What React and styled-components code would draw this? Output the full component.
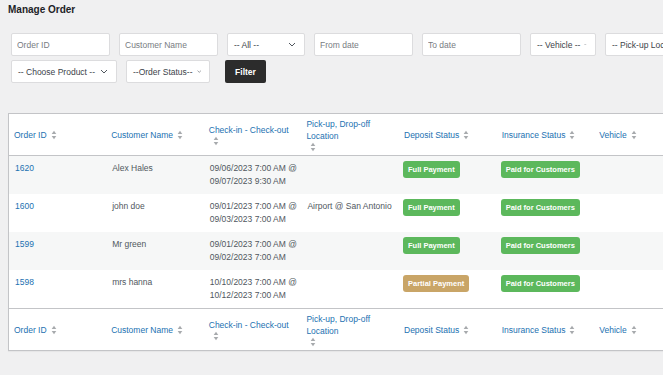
import React from 'react';
import styled, { createGlobalStyle } from 'styled-components';

const GlobalStyle = createGlobalStyle`
    body {
        margin: 0;
        background: #f0f0f1;
        font-family: "Liberation Sans", Arial, sans-serif;
        color: #2c3338;
        overflow: hidden;
    }
`;

const Page = styled.div`
    padding: 2px 8px 20px;
    width: 800px;
`;

const Title = styled.h1`
    margin: 0;
    font-size: 10px;
    font-weight: 700;
    line-height: 16px;
    color: #1d2327;
`;

const Filters = styled.div`
    margin: 15px 0 0 3px;
    width: 720px;
    display: flex;
    flex-wrap: wrap;
    column-gap: 9px;
    row-gap: 4px;
`;

const Input = styled.input`
    box-sizing: border-box;
    width: ${(p) => p.$w || 99}px;
    height: 23px;
    padding: 0 5px;
    border: 1px solid #dcdcde;
    border-radius: 2px;
    background: #fff;
    font-family: inherit;
    font-size: 8.5px;
    color: #2c3338;
    outline: none;
    &::placeholder {
        color: #787c82;
    }
`;

const Select = styled.div`
    box-sizing: border-box;
    width: ${(p) => p.$w}px;
    height: 23px;
    padding: 0 8px 0 6px;
    border: 1px solid #dcdcde;
    border-radius: 2px;
    background: #fff;
    font-size: 8.5px;
    color: #3c434a;
    display: flex;
    align-items: center;
    justify-content: space-between;
    gap: 4px;
    white-space: nowrap;
    overflow: hidden;
`;

const FilterButton = styled.button`
    box-sizing: border-box;
    margin-left: 6px;
    width: 41px;
    height: 23px;
    border: none;
    border-radius: 2px;
    background: #2c2c2c;
    color: #fff;
    font-family: inherit;
    font-size: 8.5px;
    font-weight: 700;
`;

const Table = styled.table`
    margin-top: 30px;
    width: 782px;
    table-layout: fixed;
    border-collapse: collapse;
    background: #fff;
    border: 1px solid #c3c4c7;
    box-shadow: 0 1px 1px rgba(0, 0, 0, 0.04);
`;

const Th = styled.th`
    height: 42px;
    box-sizing: border-box;
    padding: 3px 5px 3px 5px;
    text-align: left;
    vertical-align: middle;
    font-weight: 400;
    border-${(p) => (p.$foot ? 'top' : 'bottom')}: 1px solid #c3c4c7;
`;

const SortLink = styled.div`
    display: flex;
    flex-wrap: wrap;
    align-items: center;
    font-size: 8.5px;
    line-height: 12px;
    color: #2271b1;
`;

const Row = styled.tr`
    background: ${(p) => (p.$striped ? '#f6f7f7' : '#fff')};
`;

const Td = styled.td`
    height: 38px;
    box-sizing: border-box;
    padding: 6px 4px 6px 6px;
    vertical-align: top;
    font-size: 8.5px;
    line-height: 13px;
    color: ${(p) => (p.$link ? '#2271b1' : '#50575e')};
`;

const Badge = styled.span`
    display: inline-block;
    margin: -1px 0 0 -2px;
    padding: 3px 5px;
    border-radius: 3px;
    background: ${(p) => (p.$partial ? '#c9a567' : '#5cb85c')};
    color: #fff;
    font-size: 7.5px;
    font-weight: 700;
    line-height: 11px;
    white-space: nowrap;
`;

const SortWrap = styled.span`
    display: inline-flex;
    margin-left: 4px;
`;

const SortIcon = () => (
    <SortWrap>
        <svg width="6" height="10" viewBox="0 0 6 10">
            <path d="M3 0.8 L5.3 4 H0.7 Z" fill="#a7aaad" />
            <path d="M3 9.2 L5.3 6 H0.7 Z" fill="#a7aaad" />
        </svg>
    </SortWrap>
);

const Chevron = () => (
    <svg width="8" height="5" viewBox="0 0 8 5">
        <path d="M1 1 L4 4 L7 1" fill="none" stroke="#50575e" strokeWidth="1" />
    </svg>
);

const columns = [
    'Order ID',
    'Customer Name',
    'Check-in - Check-out',
    'Pick-up, Drop-off Location',
    'Deposit Status',
    'Insurance Status',
    'Vehicle',
    'Action',
];

const orders = [
    { id: '1620', name: 'Alex Hales', dates: ['09/06/2023 7:00 AM @', '09/07/2023 9:30 AM'], loc: '', deposit: 'Full Payment' },
    { id: '1600', name: 'john doe', dates: ['09/01/2023 7:00 AM @', '09/03/2023 7:00 AM'], loc: 'Airport @ San Antonio', deposit: 'Full Payment' },
    { id: '1599', name: 'Mr green', dates: ['09/01/2023 7:00 AM @', '09/02/2023 7:00 AM'], loc: '', deposit: 'Full Payment' },
    { id: '1598', name: 'mrs hanna', dates: ['10/10/2023 7:00 AM @', '10/12/2023 7:00 AM'], loc: '', deposit: 'Partial Payment' },
];

const HeaderRow = ({ foot }) => (
    <tr>
        {columns.map((c) => (
            <Th key={c} $foot={foot}>
                <SortLink>
                    <span>{c}</span>
                    <SortIcon />
                </SortLink>
            </Th>
        ))}
    </tr>
);

const App = () => {
    return (
        <Page>
            <GlobalStyle />
            <Title>Manage Order</Title>
            <Filters>
                <Input placeholder="Order ID" />
                <Input placeholder="Customer Name" />
                <Select $w={78}>
                    <span>-- All --</span>
                    <Chevron />
                </Select>
                <Input placeholder="From date" />
                <Input placeholder="To date" />
                <Select $w={66}>
                    <span>-- Vehicle --</span>
                    <Chevron />
                </Select>
                <Select $w={106}>
                    <span>-- Pick-up Location --</span>
                    <Chevron />
                </Select>
                <Select $w={106}>
                    <span>-- Choose Product --</span>
                    <Chevron />
                </Select>
                <Select $w={84}>
                    <span>--Order Status--</span>
                    <Chevron />
                </Select>
                <FilterButton>Filter</FilterButton>
            </Filters>
            <Table>
                <thead>
                    <HeaderRow />
                </thead>
                <tbody>
                    {orders.map((o, i) => (
                        <Row key={o.id} $striped={i % 2 === 0}>
                            <Td $link>{o.id}</Td>
                            <Td>{o.name}</Td>
                            <Td>
                                {o.dates[0]}
                                <br />
                                {o.dates[1]}
                            </Td>
                            <Td>{o.loc}</Td>
                            <Td>
                                <Badge $partial={o.deposit === 'Partial Payment'}>{o.deposit}</Badge>
                            </Td>
                            <Td>
                                <Badge>Paid for Customers</Badge>
                            </Td>
                            <Td />
                            <Td />
                        </Row>
                    ))}
                </tbody>
                <tfoot>
                    <HeaderRow foot />
                </tfoot>
            </Table>
        </Page>
    );
};

export default App;
